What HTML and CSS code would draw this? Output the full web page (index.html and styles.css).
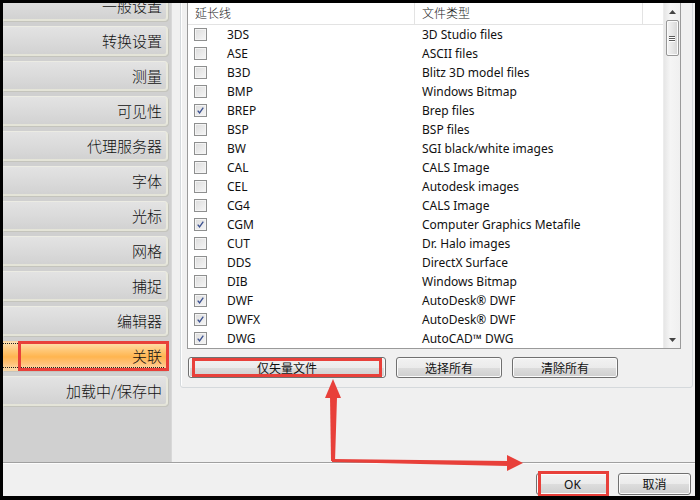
FILE: index.html
```html
<!DOCTYPE html>
<html lang="zh-CN">
<head>
<meta charset="utf-8">
<title>选项 - 关联</title>
<link rel="stylesheet" href="styles.css">
</head>
<body>
<div class="screen">
  <div class="dialog">
    <div class="top">
      <nav class="sidebar">
        <div class="tabs">
          <div class="tab">一般设置</div>
          <div class="tab">转换设置</div>
          <div class="tab">测量</div>
          <div class="tab">可见性</div>
          <div class="tab">代理服务器</div>
          <div class="tab">字体</div>
          <div class="tab">光标</div>
          <div class="tab">网格</div>
          <div class="tab">捕捉</div>
          <div class="tab">编辑器</div>
          <div class="tab active"><span class="focus"></span>关联<span class="mark"></span></div>
          <div class="tab">加载中/保存中</div>
        </div>
      </nav>
      <main class="panel">
        <div class="group">
          <div class="list">
            <div class="list-main">
              <div class="list-head">
                <div class="hcol c1">延长线</div>
                <div class="hcol c2">文件类型</div>
                <div class="hcol c3"></div>
              </div>
              <div class="rows">
                <div class="row"><span class="cb"></span><span class="ext">3DS</span><span class="type">3D Studio files</span></div>
                <div class="row"><span class="cb"></span><span class="ext">ASE</span><span class="type">ASCII files</span></div>
                <div class="row"><span class="cb"></span><span class="ext">B3D</span><span class="type">Blitz 3D model files</span></div>
                <div class="row"><span class="cb"></span><span class="ext">BMP</span><span class="type">Windows Bitmap</span></div>
                <div class="row"><span class="cb on"><svg viewBox="0 0 13 13"><path d="M3.2 6.6 L5.4 9.4 L9.8 3.2" fill="none" stroke="#3d5290" stroke-width="1.6"/></svg></span><span class="ext">BREP</span><span class="type">Brep files</span></div>
                <div class="row"><span class="cb"></span><span class="ext">BSP</span><span class="type">BSP files</span></div>
                <div class="row"><span class="cb"></span><span class="ext">BW</span><span class="type">SGI black/white images</span></div>
                <div class="row"><span class="cb"></span><span class="ext">CAL</span><span class="type">CALS Image</span></div>
                <div class="row"><span class="cb"></span><span class="ext">CEL</span><span class="type">Autodesk images</span></div>
                <div class="row"><span class="cb"></span><span class="ext">CG4</span><span class="type">CALS Image</span></div>
                <div class="row"><span class="cb on"><svg viewBox="0 0 13 13"><path d="M3.2 6.6 L5.4 9.4 L9.8 3.2" fill="none" stroke="#3d5290" stroke-width="1.6"/></svg></span><span class="ext">CGM</span><span class="type">Computer Graphics Metafile</span></div>
                <div class="row"><span class="cb"></span><span class="ext">CUT</span><span class="type">Dr. Halo images</span></div>
                <div class="row"><span class="cb"></span><span class="ext">DDS</span><span class="type">DirectX Surface</span></div>
                <div class="row"><span class="cb"></span><span class="ext">DIB</span><span class="type">Windows Bitmap</span></div>
                <div class="row"><span class="cb on"><svg viewBox="0 0 13 13"><path d="M3.2 6.6 L5.4 9.4 L9.8 3.2" fill="none" stroke="#3d5290" stroke-width="1.6"/></svg></span><span class="ext">DWF</span><span class="type">AutoDesk® DWF</span></div>
                <div class="row"><span class="cb on"><svg viewBox="0 0 13 13"><path d="M3.2 6.6 L5.4 9.4 L9.8 3.2" fill="none" stroke="#3d5290" stroke-width="1.6"/></svg></span><span class="ext">DWFX</span><span class="type">AutoDesk® DWF</span></div>
                <div class="row"><span class="cb on"><svg viewBox="0 0 13 13"><path d="M3.2 6.6 L5.4 9.4 L9.8 3.2" fill="none" stroke="#3d5290" stroke-width="1.6"/></svg></span><span class="ext">DWG</span><span class="type">AutoCAD™ DWG</span></div>
              </div>
            </div>
            <div class="scrollbar">
              <div class="arrow up"><svg viewBox="0 0 7 4"><path d="M0 4 L3.5 0 L7 4 Z" fill="#444"/></svg></div>
              <div class="thumb"><span></span><span></span><span></span></div>
              <div class="track"></div>
              <div class="arrow down"><svg viewBox="0 0 7 4"><path d="M0 0 L7 0 L3.5 4 Z" fill="#444"/></svg></div>
            </div>
          </div>
          <div class="btn-row">
            <button class="btn wide">仅矢量文件<span class="mark"></span></button>
            <button class="btn mid">选择所有</button>
            <button class="btn mid">清除所有</button>
          </div>
        </div>
      </main>
    </div>
    <div class="footer">
      <button class="btn foot ok">OK<span class="mark"></span></button>
      <button class="btn foot">取消</button>
    </div>
  </div>
  <svg class="arrows" width="700" height="500" viewBox="0 0 700 500">
    <polygon points="331,461 335,461 337,397 330,397" fill="#e8403a"/>
    <polygon points="325,398 341,398 333,379" fill="#e8403a"/>
    <polygon points="332,459 508,461 508,466 332,462" fill="#e8403a"/>
    <polygon points="507,455 523,463 507,471" fill="#e8403a"/>
  </svg>
</div>
</body>
</html>
```

FILE: styles.css
```css
html, body {
  margin: 0;
  padding: 0;
  background: #000;
}

.screen {
  position: relative;
  width: 700px;
  height: 500px;
  box-sizing: border-box;
  padding: 3px 5px 4px 3px;
  background: #000;
  font-family: "Noto Sans", "Noto Sans CJK SC", sans-serif;
  font-size: 12px;
  color: #000;
}

.dialog {
  width: 692px;
  height: 493px;
  background: #f0f0f0;
  display: flex;
  flex-direction: column;
  overflow: hidden;
}

.top {
  display: flex;
  height: 459px;
  flex: none;
}

/* ---------- sidebar ---------- */
.sidebar {
  width: 169px;
  flex: none;
  background: #d0d0d0;
  overflow: hidden;
  border-right: 1px solid #d8d8d8;
  box-sizing: border-box;
}

.tabs {
  display: flex;
  flex-direction: column;
  gap: 5px;
  margin-top: -12px;
}

.tab {
  position: relative;
  width: 165px;
  height: 30px;
  box-sizing: border-box;
  padding-right: 4px;
  display: flex;
  align-items: center;
  justify-content: flex-end;
  font-family: "Noto Sans CJK SC", sans-serif;
  font-weight: 300;
  font-size: 15px;
  color: #111;
  background: linear-gradient(#e3e3e3, #d9d9d9 60%, #d2d2d2);
  border-top: 1px solid #ecece4;
  border-right: 2px solid #e9e9dd;
  border-bottom: 2px solid #e4e4d8;
  border-radius: 0 4px 4px 0;
  box-shadow: 1px 1px 0 #c4c4bc;
}

.tab.active {
  background: linear-gradient(#ffe2b3, #ffc878 30%, #ffb54f 55%, #ffc27a 80%, #ffd9a4);
  border-color: #f7d7a8;
}

.tab .focus {
  position: absolute;
  left: 0;
  right: 2px;
  top: 1px;
  bottom: 1px;
  border-top: 1px dotted #222;
  border-bottom: 1px dotted #222;
}

.mark {
  position: absolute;
  border: 3px solid #e8403a;
  box-sizing: border-box;
  pointer-events: none;
}

.tab .mark {
  left: 15px;
  right: -3px;
  top: -1px;
  bottom: -2px;
}

/* ---------- main panel ---------- */
.panel {
  flex: 1;
  background: #f0f0f0;
  position: relative;
}

.group {
  margin: -10px 2px 0 8px;
  height: 395px;
  box-sizing: border-box;
  border: 1px solid #d5d9dc;
  border-radius: 3px;
  padding-left: 6px;
  box-shadow: inset 1px 1px 0 #fff;
}

.list {
  width: 494px;
  height: 347px;
  margin-top: 8px;
  box-sizing: border-box;
  border: 1px solid #9a9a9a;
  background: #fff;
  display: flex;
}

.list-main {
  flex: 1;
  display: flex;
  flex-direction: column;
}

.list-head {
  height: 22px;
  box-sizing: border-box;
  border-bottom: 1px solid #e3e3e3;
  display: flex;
  font-family: "Noto Sans CJK SC", sans-serif;
  font-weight: 300;
  font-size: 12px;
  color: #222;
  line-height: 19px;
}

.hcol {
  box-sizing: border-box;
  border-right: 1px solid #e3e3e3;
}

.hcol.c1 {
  width: 227px;
  padding-left: 7px;
}

.hcol.c2 {
  width: 228px;
  padding-left: 7px;
}

.hcol.c3 {
  flex: 1;
  border-right: none;
}

.rows {
  display: flex;
  flex-direction: column;
}

.row {
  height: 19px;
  display: flex;
  align-items: center;
  font-size: 12px;
  color: #111;
}

.cb {
  width: 13px;
  height: 13px;
  box-sizing: border-box;
  margin-left: 6px;
  border: 1px solid #8e8f8f;
  background: linear-gradient(135deg, #dcdcdc, #f6f6f6);
  box-shadow: inset 0 0 0 1px #f4f4f4;
  flex: none;
  display: flex;
}

.cb svg {
  width: 11px;
  height: 11px;
}

.ext {
  width: 188px;
  padding-left: 20px;
  flex: none;
}

.type {
  padding-left: 7px;
  white-space: nowrap;
}

/* scrollbar */
.scrollbar {
  width: 17px;
  flex: none;
  display: flex;
  flex-direction: column;
  align-items: center;
  background: linear-gradient(90deg, #e6e6e6, #f5f5f5 40%, #f0f0f0);
  border-left: 1px solid #ececec;
  box-sizing: border-box;
}

.arrow {
  height: 17px;
  width: 100%;
  display: flex;
  align-items: center;
  justify-content: center;
  flex: none;
}

.arrow svg {
  width: 7px;
  height: 4px;
}

.thumb {
  width: 13px;
  height: 36px;
  box-sizing: border-box;
  border: 1px solid #979797;
  border-radius: 2px;
  background: linear-gradient(90deg, #f4f4f4, #e6e6e6 50%, #d6d6d6);
  box-shadow: inset 0 0 0 1px #fbfbfb;
  display: flex;
  flex-direction: column;
  align-items: center;
  justify-content: center;
  gap: 1px;
  flex: none;
}

.thumb span {
  width: 6px;
  height: 1px;
  background: #5b5b5b;
  box-shadow: 0 1px 0 #fff;
}

.track {
  flex: 1;
}

/* buttons */
.btn-row {
  display: flex;
  gap: 10px;
  margin-top: 8px;
  margin-left: 1px;
}

.btn {
  position: relative;
  height: 21px;
  box-sizing: border-box;
  border: 1px solid #707070;
  border-radius: 3px;
  background: linear-gradient(#f2f2f2, #ebebeb 50%, #dddddd 51%, #cfcfcf);
  box-shadow: inset 0 0 0 1px #fbfbfb;
  font-family: "Noto Sans", "Noto Sans CJK SC", sans-serif;
  font-size: 12px;
  color: #111;
  padding: 0;
  margin: 0;
  display: flex;
  align-items: center;
  justify-content: center;
}

.btn.wide {
  width: 198px;
}

.btn.mid {
  width: 106px;
}

.btn.wide .mark {
  left: 3px;
  right: 3px;
  top: 0;
  bottom: 0;
}

/* footer */
.footer {
  flex: 1;
  border-top: 1px solid #a0a0a0;
  box-shadow: inset 0 1px 0 #fcfcfc;
  display: flex;
  justify-content: flex-end;
  gap: 9px;
  padding: 10px 4px 0 0;
}

.btn.foot {
  width: 73px;
  height: 22px;
}

.btn.ok .mark {
  left: 1px;
  right: -1px;
  top: -3px;
  bottom: -3px;
}

.arrows {
  position: absolute;
  left: 0;
  top: 0;
  pointer-events: none;
}
```
